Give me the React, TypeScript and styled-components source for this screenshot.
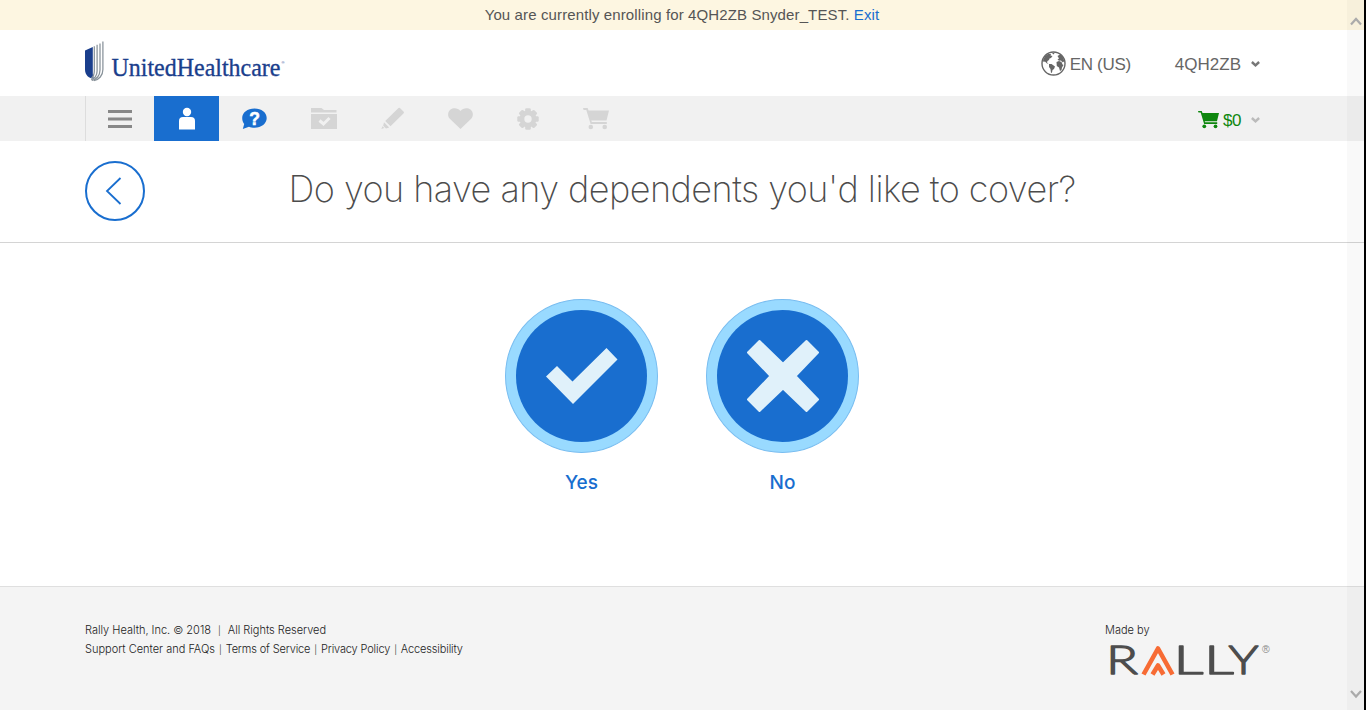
import React from "react";
import styled, { createGlobalStyle } from "styled-components";

const Global = createGlobalStyle`
  * { box-sizing: border-box; }
  body { margin: 0; background: #fff; font-family: "Liberation Sans", Arial, sans-serif; color: #555; }
  a { color: inherit; text-decoration: none; }
  button { font: inherit; color: inherit; border: 0; padding: 0; background: none; }
  svg { display: block; flex: none; overflow: visible; }
`;
const Page = styled.div`
  position: relative; width: 100%; height: 710px; overflow: hidden;
  display: flex; flex-direction: column; padding-right: 2px; background: #000;
`;
const Banner = styled.div`
  height: 30px; background: #fdf6e1; text-align: center; font-size: 15px; line-height: 30px;
  letter-spacing: 0.12px; color: #555;
  a { color: #196ecf; }
`;
const Header = styled.header`
  height: 66px; background: #fff; padding: 0 104px 0 85px;
  display: flex; justify-content: space-between;
`;
const Tools = styled.div`
  display: flex; align-items: center; font-size: 17px; color: #666; padding-top: 3px;
`;
const Locale = styled.button`
  display: flex; align-items: center; gap: 4px; margin-right: 44px; letter-spacing: -0.3px;
  svg { margin-top: -3px; }
`;
const Account = styled.button`
  display: flex; align-items: center; gap: 10px; letter-spacing: 0;
  svg { margin-top: -2px; }
`;
const Nav = styled.nav`
  height: 45px; background: #f1f1f1; padding: 0 104px 0 85px; display: flex; justify-content: space-between;
`;
const Tabs = styled.div`display: flex; border-left: 1px solid #ddd;`;
const Tab = styled.button<{ $active?: boolean; $tone?: string }>`
  width: ${p => (p.$active ? 65 : 68)}px; margin-right: ${p => (p.$active ? 2 : 0)}px; height: 45px;
  display: flex; align-items: center; justify-content: center;
  background: ${p => (p.$active ? "#196ecf" : "transparent")};
  && { color: ${p => p.$tone || "#d5d5d5"}; }
  &:nth-child(3) { padding-right: 2px; }
  &:nth-child(n + 4) { padding-left: 2px; }
`;
const Cart = styled.button`
  && { color: #0e870e; }
  display: flex; align-items: center; font-size: 17px; gap: 4px; padding-top: 5px; letter-spacing: -0.5px;
  svg:first-child { margin-top: -3px; }
  svg:last-child { margin-left: 6px; margin-top: -3px; }
`;
const TitleBar = styled.section`
  height: 102px; background: #fff; border-bottom: 1px solid #d4d4d4; padding: 0 85px 2px;
  display: grid; grid-template-columns: 60px 1fr 60px; align-items: center;
`;
const Back = styled.button`
  width: 60px; height: 60px; border: 2px solid #196ecf; border-radius: 50%; padding-right: 4px;
  && { color: #196ecf; }
  display: flex; align-items: center; justify-content: center;
`;
const Title = styled.h1`
  margin: 0; padding-bottom: 4px; text-align: center; white-space: nowrap; color: #4c4c4c;
  font: 200 36px/44px Inter, sans-serif; letter-spacing: -0.52px;
`;
const Main = styled.main`
  height: 343px; background: #fff; padding: 56px 0 0; display: flex; justify-content: center; gap: 48px;
`;
const Choice = styled.button`
  display: flex; flex-direction: column; align-items: center; gap: 18px; align-self: flex-start;
  font: 500 19px/24px Inter, sans-serif; && { color: #196ecf; }
`;
const Disc = styled.span`
  width: 153px; height: 154px; border-radius: 50%; border: 1px solid #79bdf0; padding: 10px;
  background: #99daff; display: flex;
`;
const DiscCore = styled.span`
  flex: 1; border-radius: 50%; background: #196ecf; display: flex; align-items: center; justify-content: center;
`;
const Footer = styled.footer`
  flex: 1; background: #f4f4f4; border-top: 1px solid #dfdfdf; padding: 34px 93px 0 85px;
  display: flex; justify-content: space-between; color: #222;
  font: 300 11px/19px Inter, sans-serif;
`;
const Line = styled.div<{ $gap: number; $tight?: boolean }>`
  display: flex; gap: ${p => p.$gap}px; white-space: nowrap; letter-spacing: ${p => (p.$tight ? -0.15 : -0.01)}px;
  span:nth-child(even) { font-size: 9px; }
  a:first-child { letter-spacing: 0; }
`;
const Maker = styled.div`width: 166px;`;
const Scroll = styled.div`
  position: absolute; right: 2px; top: 0; width: 17px; height: 100%;
  background: rgba(0, 0, 0, 0.025); display: flex; flex-direction: column;
  justify-content: space-between; align-items: center; padding: 17px 0 12px;
`;

const Chevron = ({ color }: { color: string }) => (
  <svg width="9" height="6" viewBox="0 0 9 6"><path d="M.9 1 4.5 4.3 8.1 1" fill="none" stroke={color} strokeWidth="2.5" /></svg>
);
const CartIcon = ({ w }: { w: number }) => (
  <svg width={w} height={w * 0.82} viewBox="0 0 26 21.3" fill="currentColor">
    <path d="M0 0h4.6l1 2.6H26l-2.5 10H8.3l.5 1.4h15v2.1H7.6L3.3 2H.6z" />
    <circle cx="7.8" cy="19" r="2.3" /><circle cx="21.7" cy="19" r="2.3" />
  </svg>
);
const UnitedLogo = () => (
  <svg width="202" height="66" viewBox="85 30 202 66">
    <path d="M85 50.5 92.8 47v26.5c0 2.5.6 4.3 1.6 5.3-5.6-.5-9.4-3.5-9.4-9.3z" fill="#1a3e8c" />
    <g fill="none" stroke="#88929a" strokeWidth="1.25">
      <path d="M94.3 46.2V71c0 3.5-1 5.8-3 7.3" /><path d="M97.1 44.8V71c0 4.5-2.7 8.2-6 9" />
      <path d="M100 43.4V70c0 5.5-3.6 9.7-8 10.4" /><path d="M102.9 41.5V69.5c0 6-4 10.3-9 11.1" />
    </g>
    <text x="111.5" y="76" fill="#1a3e8c" stroke="#1a3e8c" strokeWidth=".35" fontFamily="Liberation Serif, serif" fontSize="26" textLength="169" lengthAdjust="spacingAndGlyphs">UnitedHealthcare</text>
    <text x="281.5" y="63.5" fill="#1a3e8c" fontFamily="Liberation Sans, sans-serif" fontSize="4">®</text>
  </svg>
);
const Globe = () => (
  <svg width="25" height="25" viewBox="0 0 25 25">
    <circle cx="12.5" cy="12.5" r="11.5" fill="none" stroke="#666" strokeWidth="1.4" />
    <path fill="#666" d="M2 9 4 5l3-2 3 0-.5 1.5 2 .5L10 7 8.5 7.5 8 9 6.5 10l-.5 1.5 1.5 1L6 12.5 4 10.5 2.5 11zM11 2l3-.5-1.5 2zM8 13l2.5 0 3.5 2.5-1 2.5-1.5 1-.5 2.5-1 .5-.5-4-1.5-2zM16.500 5l2.500-1.500 1.500.8 2 3 1 4.200-1.500-1-.5 1-1.500-2-2 .2-1.500-1.200 1.500-1zM15.500 11l2.500-1 2.500 1 1 2.500 1 .5-1.500 2.500-.5 2.500-1.500 1-1-3.500-2.200-1.500z" />
  </svg>
);
const RallyLogo = () => (
  <svg width="166" height="38" viewBox="1105 640 166 38">
    <g fill="#4d4d4d" stroke="#4d4d4d" strokeWidth="1.3" strokeLinejoin="round" fontFamily="Lato, sans-serif" fontSize="39.5">
      <text x="1106" y="674" textLength="32" lengthAdjust="spacingAndGlyphs">R</text>
      <text x="1173.5" y="674" textLength="30" lengthAdjust="spacingAndGlyphs">L</text>
      <text x="1204" y="674" textLength="30" lengthAdjust="spacingAndGlyphs">L</text>
      <text x="1228.5" y="674" textLength="30" lengthAdjust="spacingAndGlyphs">Y</text>
    </g>
    <g fill="none" stroke="#f76b34" strokeWidth="4.6" strokeLinejoin="round">
      <path d="M1143.5 674.5 1158 648.5 1172.5 674.5" /><path d="M1152.5 674.5 1158 665.5 1163.5 674.5" />
    </g>
    <text x="1262" y="653" fill="#888" fontFamily="Liberation Sans, sans-serif" fontSize="10.5">®</text>
  </svg>
);

export default function App() {
  return (
    <Page>
      <Global />
      <Banner>You are currently enrolling for 4QH2ZB Snyder_TEST. <a href="#">Exit</a></Banner>
      <Header>
        <UnitedLogo />
        <Tools>
          <Locale><Globe />EN (US)</Locale>
          <Account>4QH2ZB<Chevron color="#777" /></Account>
        </Tools>
      </Header>
      <Nav>
        <Tabs>
          <Tab $tone="#888"><svg width="24" height="18" fill="currentColor"><path d="M0 0h24v3H0zM0 7.5h24v3H0zM0 15h24v3H0z" /></svg></Tab>
          <Tab $active $tone="#fff"><svg width="16" height="22" fill="currentColor"><circle cx="8" cy="4" r="4.2" /><path d="M0 21.5V13q0-4 4-4h8q4 0 4 4v8.5z" /></svg></Tab>
          <Tab $tone="#196ecf">
            <svg width="25" height="22"><path d="M12.5.5C19.5.5 24.7 4.6 24.7 10S19.5 19.8 12.5 19.8c-2 0-4-.3-5.5-1L.8 21 2.2 16C.9 14.3.2 12.2.2 10 .2 4.6 5.5.5 12.5.5z" fill="currentColor" />
              <text x="12.5" y="16.5" textAnchor="middle" fill="#fff" stroke="#fff" strokeWidth=".5" fontFamily="Liberation Sans, sans-serif" fontWeight="bold" fontSize="17.5">?</text></svg>
          </Tab>
          <Tab><svg width="26" height="21"><path d="M0 0h10.5l2.5 2h12.5v2.5H0zM0 6h26v15H0z" fill="currentColor" /><path d="m8.5 12.5 4 3.5 6-6" fill="none" stroke="#f1f1f1" strokeWidth="3" /></svg></Tab>
          <Tab><svg width="23" height="21" fill="currentColor"><path d="M17.5 0q.9-.6 1.7.2L22.7 3.7q.6.8 0 1.6L9.5 18.2 4.2 13zM3 14.3l5.2 5.2-3.2 1-2.8-2.8z" /><path d="m1.5 18.2 1.8 1.8L.3 21z" /></svg></Tab>
          <Tab><svg width="25" height="21"><path d="M12.5 21 1.8 10.8C-.7 8.2-.3 3.9 2.5 1.6 5.5-.8 10-.2 12.5 3 15-.2 19.5-.8 22.5 1.6c2.8 2.3 3.2 6.6.7 9.2z" fill="currentColor" /></svg></Tab>
          <Tab>
            <svg width="22" height="22" viewBox="-11 -11 22 22"><g fill="currentColor">
              {[0, 45, 90, 135].map(a => <rect key={a} x="-2.8" y="-10.7" width="5.6" height="21.4" rx="1.2" transform={`rotate(${a})`} />)}
              <circle r="8.4" /></g><circle r="3.7" fill="#f1f1f1" /></svg>
          </Tab>
          <Tab><CartIcon w={26} /></Tab>
        </Tabs>
        <Cart><CartIcon w={21} />$0<Chevron color="#bbb" /></Cart>
      </Nav>
      <TitleBar>
        <Back><svg width="15" height="28"><path d="M14.5 1 1 14l13.5 13" fill="none" stroke="currentColor" strokeWidth="1.8" /></svg></Back>
        <Title>Do you have any dependents you'd like to cover?</Title>
      </TitleBar>
      <Main>
        <Choice>
          <Disc><DiscCore><svg width="72" height="56" fill="#e0f1fa"><path d="M0 28.5 11 18 26.5 33.5 60.5 0 71.5 11.5 27 56z" /></svg></DiscCore></Disc>
          Yes
        </Choice>
        <Choice>
          <Disc><DiscCore><svg width="72" height="72" fill="#e0f1fa" stroke="#e0f1fa" strokeWidth="2" strokeLinejoin="round"><path d="M12.5 1 36 23.7 59.5 1 71 12.5 48.5 36 71 59.5 59.5 71 36 48.5 12.5 71 1 59.5 23.5 36 1 12.5z" /></svg></DiscCore></Disc>
          No
        </Choice>
      </Main>
      <Footer>
        <div>
          <Line $gap={7}><span>Rally Health, Inc. © 2018</span><span>|</span><span>All Rights Reserved</span></Line>
          <Line $gap={4} $tight><a href="#">Support Center and FAQs</a><span>|</span><a href="#">Terms of Service</a><span>|</span><a href="#">Privacy Policy</a><span>|</span><a href="#">Accessibility</a></Line>
        </div>
        <Maker>Made by<RallyLogo /></Maker>
      </Footer>
      <Scroll>
        <svg width="12" height="9"><path d="M1 7.5 6 2l5 5.5" fill="none" stroke="#aaa" strokeWidth="2.2" /></svg>
        <svg width="12" height="8"><path d="m1 1 5 5.500L11 1" fill="none" stroke="#aaa" strokeWidth="2.2" /></svg>
      </Scroll>
    </Page>
  );
}
